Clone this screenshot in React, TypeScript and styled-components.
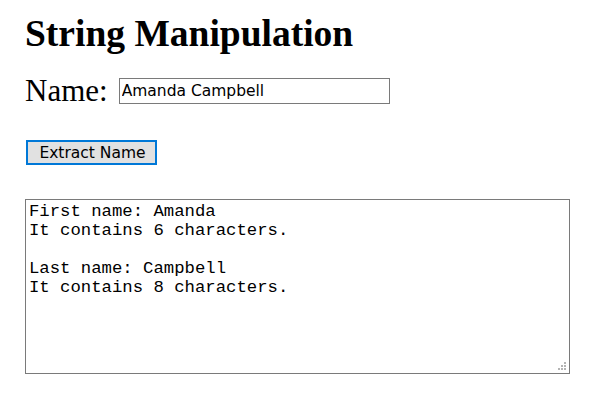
import styled, { createGlobalStyle } from "styled-components";

const GlobalStyle = createGlobalStyle`
  html, body {
    margin: 0;
    padding: 0;
    background: #ffffff;
  }
  body {
    font-family: "Liberation Serif", "Times New Roman", serif;
    color: #000000;
  }
`;

const Page = styled.main`
  display: flex;
  flex-direction: column;
  align-items: flex-start;
  padding: 12px 25px 0 25px;
`;

const Title = styled.h1`
  margin: 0;
  font-size: 37.5px;
  font-weight: bold;
  line-height: 44px;
`;

const NameRow = styled.label`
  display: flex;
  align-items: center;
  gap: 11px;
  margin-top: 17px;
  font-size: 31px;
  line-height: 36px;
`;

const NameInput = styled.input`
  box-sizing: border-box;
  width: 271px;
  height: 26px;
  margin: 0;
  padding: 1px 2px;
  border: 1px solid #7a7a7a;
  font-family: "DejaVu Sans", "Noto Sans", sans-serif;
  font-size: 15.5px;
  color: #000;
  outline: none;
`;

const ExtractButton = styled.button`
  box-sizing: border-box;
  width: 131px;
  height: 25px;
  margin: 31px 0 0 1px;
  padding: 0 0 0 2px;
  border: 2px solid #0078d7;
  background: #e1e1e1;
  font-family: "DejaVu Sans", "Noto Sans", sans-serif;
  font-size: 15.5px;
  color: #000;
`;

const OutputBox = styled.div`
  position: relative;
  margin-top: 34px;
`;

const Output = styled.textarea`
  display: block;
  box-sizing: border-box;
  width: 545px;
  height: 175px;
  margin: 0;
  padding: 2px 3px;
  border: 1px solid #7a7a7a;
  font-family: "Liberation Mono", "Courier New", monospace;
  font-size: 17.3px;
  line-height: 19px;
  color: #000;
  resize: none;
  outline: none;
`;

const Grip = styled.svg`
  position: absolute;
  right: 4px;
  bottom: 4px;
  pointer-events: none;
`;

const result = `First name: Amanda
It contains 6 characters.

Last name: Campbell
It contains 8 characters.`;

export default function App() {
  return (
    <>
      <GlobalStyle />
      <Page>
        <Title>String Manipulation</Title>
        <NameRow>
          Name:
          <NameInput type="text" defaultValue="Amanda Campbell" />
        </NameRow>
        <ExtractButton type="button">Extract Name</ExtractButton>
        <OutputBox>
          <Output readOnly value={result} />
          <Grip width="8" height="8" viewBox="0 0 8 8" fill="#b4b4b4">
            <rect x="6" y="0" width="2" height="2" />
            <rect x="3" y="3" width="2" height="2" />
            <rect x="6" y="3" width="2" height="2" />
            <rect x="0" y="6" width="2" height="2" />
            <rect x="3" y="6" width="2" height="2" />
            <rect x="6" y="6" width="2" height="2" />
          </Grip>
        </OutputBox>
      </Page>
    </>
  );
}
